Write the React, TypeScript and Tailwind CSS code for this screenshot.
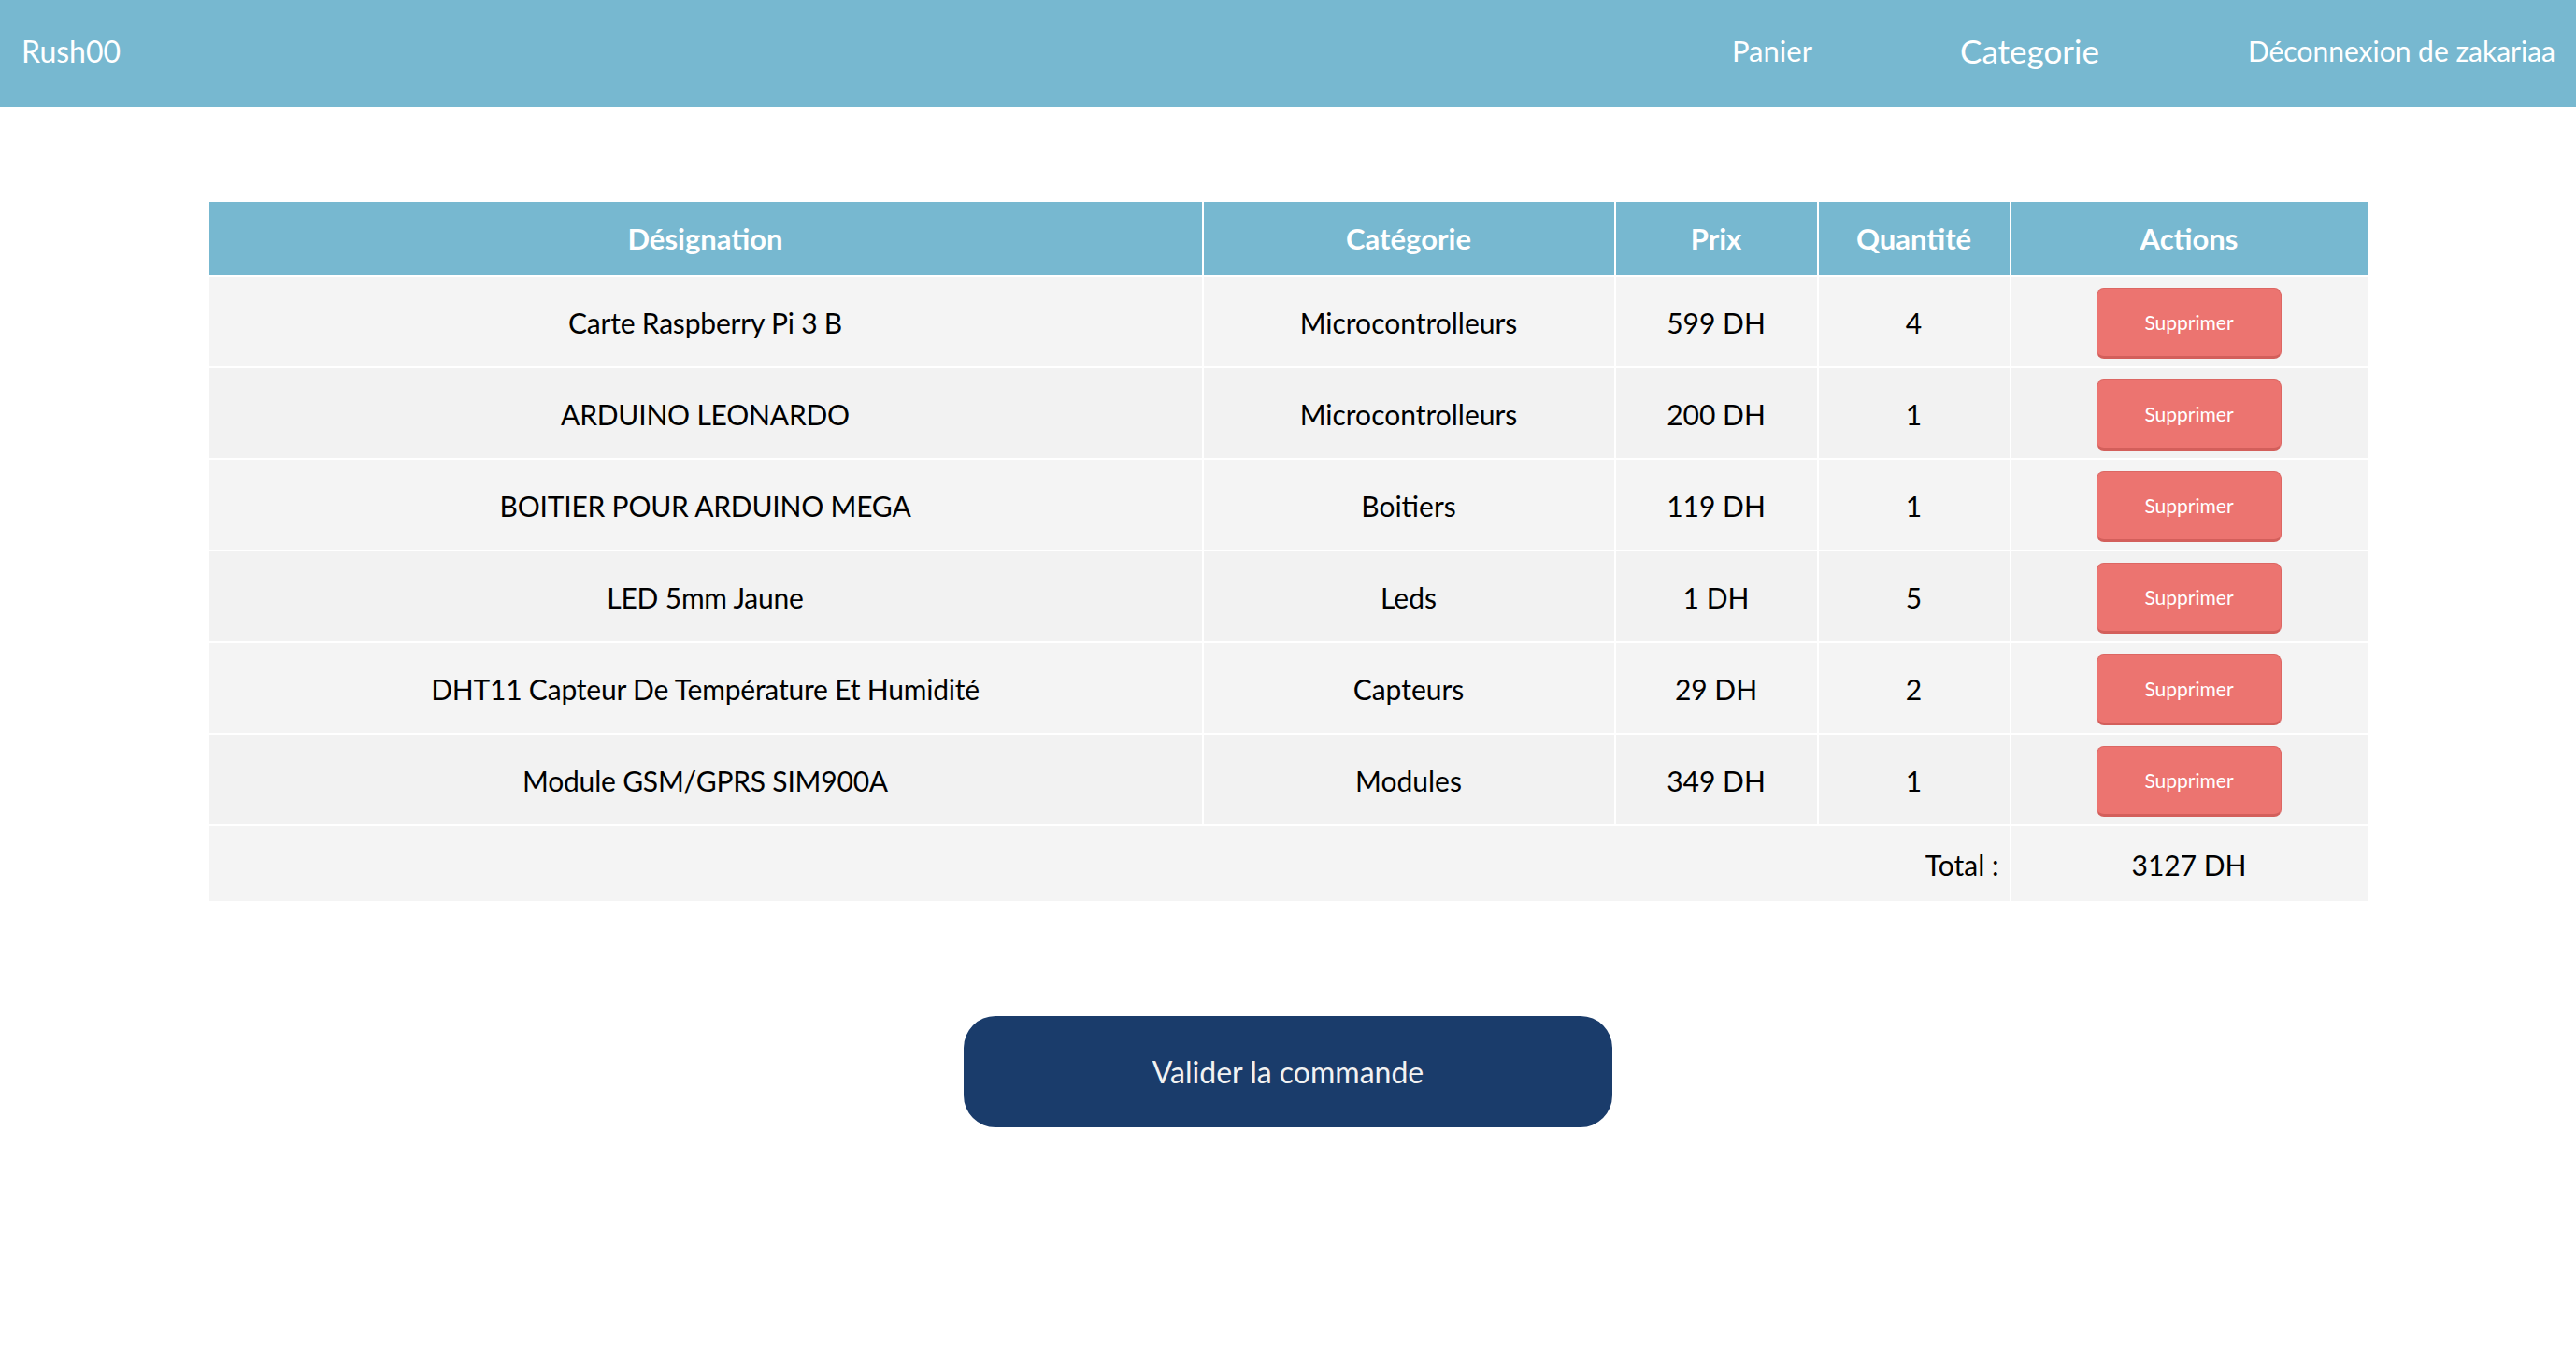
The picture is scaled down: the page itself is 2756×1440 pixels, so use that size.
// Shopping cart page: header nav, product table, validate button
const items = [
  { name: 'Carte Raspberry Pi 3 B', cat: 'Microcontrolleurs', price: '599 DH', qty: 4 },
  { name: 'ARDUINO LEONARDO', cat: 'Microcontrolleurs', price: '200 DH', qty: 1 },
  { name: 'BOITIER POUR ARDUINO MEGA', cat: 'Boitiers', price: '119 DH', qty: 1 },
  { name: 'LED 5mm Jaune', cat: 'Leds', price: '1 DH', qty: 5 },
  { name: 'DHT11 Capteur De Température Et Humidité', cat: 'Capteurs', price: '29 DH', qty: 2 },
  { name: 'Module GSM/GPRS SIM900A', cat: 'Modules', price: '349 DH', qty: 1 },
];

const headers = ['Désignation', 'Catégorie', 'Prix', 'Quantité', 'Actions'];

export default function App() {
  return (
    <div className="min-h-screen bg-white font-[Lato,sans-serif] text-black">
      {/* Header */}
      <header className="h-[114px] pb-[5px] bg-[#77b8d0] flex items-center justify-between pl-[23px] pr-[22px] text-white">
        <span className="text-[32px] leading-none">Rush00</span>
        <nav className="flex items-center">
          <a className="w-[84px] text-center text-[31px] whitespace-nowrap">Panier</a>
          <a className="ml-[160px] w-[144px] text-center text-[35px] whitespace-nowrap">Categorie</a>
          <a className="ml-[162px] w-[331px] text-right text-[30px] whitespace-nowrap">Déconnexion de zakariaa</a>
        </nav>
      </header>

      {/* Cart table */}
      <main className="flex flex-col items-center">
        <div className="mt-[102px] w-[2309px] grid grid-cols-[1062px_439px_215px_204px_381px] gap-[2px]">
          {headers.map((h) => (
            <div key={h} className="h-[78px] bg-[#77b8d0] flex items-center justify-center text-white font-bold text-[31px]">
              {h}
            </div>
          ))}

          {items.map((it, i) => {
            const bg = i % 2 === 0 ? 'bg-[#f4f4f4]' : 'bg-[#f2f2f2]';
            return [
              <div key={`n${i}`} className={`h-[96px] pt-[2px] ${bg} flex items-center justify-center text-[30px] tracking-[-0.2px]`}>{it.name}</div>,
              <div key={`c${i}`} className={`h-[96px] pt-[2px] ${bg} flex items-center justify-center text-[30px]`}>{it.cat}</div>,
              <div key={`p${i}`} className={`h-[96px] pt-[2px] ${bg} flex items-center justify-center text-[30px]`}>{it.price}</div>,
              <div key={`q${i}`} className={`h-[96px] pt-[2px] ${bg} flex items-center justify-center text-[30px]`}>{it.qty}</div>,
              <div key={`a${i}`} className={`h-[96px] ${bg} flex items-center justify-center pt-[4px]`}>
                <button className="w-[198px] h-[76px] rounded-[8px] bg-[#ec7470] border border-[#dc6763] border-b-[3px] border-b-[#d35f5b] text-white text-[21px]">
                  Supprimer
                </button>
              </div>,
            ];
          })}

          <div className="col-span-4 h-[80px] pt-[3px] bg-[#f4f4f4] flex items-center justify-end pr-[11px] text-[30px]">Total :</div>
          <div className="h-[80px] pt-[3px] bg-[#f4f4f4] flex items-center justify-center text-[30px]">3127 DH</div>
        </div>

        <button className="mt-[123px] w-[694px] h-[119px] rounded-[34px] bg-[#1a3c6b] text-[#f2f2f2] text-[32px]">
          Valider la commande
        </button>
      </main>
    </div>
  );
}
